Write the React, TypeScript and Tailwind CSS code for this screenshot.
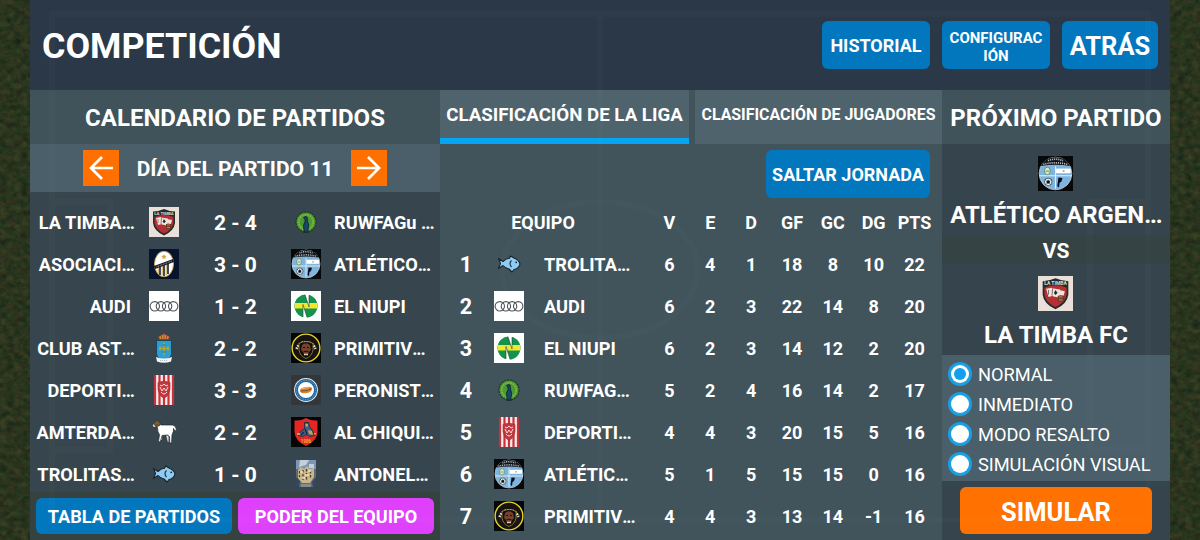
import type { ReactNode } from "react";

type CrestName =
  | "timba"
  | "asociacion"
  | "audi"
  | "asturias"
  | "deportivo"
  | "ram"
  | "fish"
  | "peacock"
  | "atletico"
  | "niupi"
  | "primitivos"
  | "peronistas"
  | "chiqui"
  | "antonela";

const crests: Record<CrestName, ReactNode> = {
  timba: (
    <>
      <rect width="30" height="30" fill="#e9e0d9" />
      <path d="M4 4.500 Q9 4.500 15 2 Q21 4.500 26 4.500 L26 16 Q25 24 15 28.500 Q5 24 4 16Z" fill="#252c2a" />
      <path d="M5.500 10 Q15 6 24.500 10 L24.500 16 Q23 23 15 26.500 Q7 23 5.500 16Z" fill="#b62f34" />
      <path d="M7 11 l5 -1 1 7 -4 1Z M12 10.500 l7 1 -1 7 -5 -1Z M18 12 l5 1 -1 4 -5 -1Z" fill="#eee3db" />
      <path d="M17 17 h6 l-1 5 h-5Z" fill="#6d3b24" />
      <path d="M18 18 h3 M18 20.500 h3" stroke="#c99d70" strokeWidth=".8" />
      <path d="M15 12.500 l1.500 2 -1.500 1.500 -1 -1.500Z M9 12 v4 M12.500 11 l-.5 6" fill="#222" stroke="#222" strokeWidth=".5" />
      <text x="15" y="8" textAnchor="middle" fontSize="4.300" fontWeight="700" fill="#dddcd0">LA TIMBA</text>
    </>
  ),
  asociacion: (
    <>
      <rect width="30" height="30" fill="#07142d" />
      <ellipse cx="15" cy="15" rx="9.500" ry="12.700" fill="#fff" stroke="#c7a352" strokeWidth="1" />
      <path d="M11 18 v8 M15 16 v11 M19 14 v11" stroke="#171e2b" strokeWidth="1.600" />
      <path d="M9.200 19 v6 M13.200 17 v9 M17.200 15 v11" stroke="#caa557" strokeWidth="1" />
      <path d="M5 17 L24 10 L25 13 L6 20Z" fill="#151c2b" />
      <path d="M7.500 17.800 L23 12" stroke="#d8c79a" strokeWidth=".8" strokeDasharray="1 .7" />
      <path d="M15 5 l.8 1.700 1.900 .2 -1.400 1.300 .4 1.900 -1.700 -.9 -1.700 .9 .4 -1.900 -1.400 -1.300 1.900 -.2Z" fill="#d7a543" />
    </>
  ),
  audi: (
    <>
      <rect width="30" height="30" fill="#fff" />
      <g fill="none" stroke="#50545a" strokeWidth="1.100">
        <circle cx="5.800" cy="15.300" r="4.700" />
        <circle cx="11.900" cy="15.300" r="4.700" />
        <circle cx="18.100" cy="15.300" r="4.700" />
        <circle cx="24.200" cy="15.300" r="4.700" />
      </g>
    </>
  ),
  asturias: (
    <>
      <path d="M10.500 6.500 L9.500 3.500 L12 2.500 L15 .8 L18 2.500 L20.500 3.500 L19.500 6.500Z" fill="#d08b3a" stroke="#8a3a2d" strokeWidth=".8" />
      <path d="M12.500 3 v3 M15 2 v4 M17.500 3 v3" stroke="#a33b30" strokeWidth=".8" />
      <path d="M7.500 7.500 h15 v13 q0 5 -7.500 7.500 q-7.500 -2.500 -7.500 -7.500Z" fill="#2b9ed5" stroke="#1c3c4c" strokeWidth=".8" />
      <path d="M15 9.500 v13 M10 15.500 h10 M11 13.500 v4 M19 13.500 v4" stroke="#b5a62e" strokeWidth="1.500" />
      <path d="M13.500 12 h3 M13.500 19 h3" stroke="#1d6a7c" strokeWidth=".8" />
      <path d="M7 24 Q15 27 23 24 L22 28.500 Q15 31 8 28.500Z" fill="#f2f4f4" />
      <path d="M11 27.500 h8" stroke="#8e9496" strokeWidth=".6" strokeDasharray="1 1" />
    </>
  ),
  deportivo: (
    <>
      <rect x="5" width="20" height="30" fill="#f6eaec" />
      <path d="M6 0 v30 M10.500 0 v30 M15 0 v30 M19.500 0 v30 M24 0 v30" stroke="#c5343b" strokeWidth="2.200" />
      <path d="M9 7.500 Q15 5 21 7.500 v7 Q20 21 15 23.500 Q10 21 9 14.500Z" fill="#c6373d" stroke="#a52a32" strokeWidth=".6" />
      <path d="M11 10 l2 1 2 -2 2 2 2 -1 M11 12 l2 4 2 -3 2 3 2 -4 M12 17 q3 4 6 0" fill="none" stroke="#f4dedf" strokeWidth="1" />
    </>
  ),
  ram: (
    <g stroke="#22272a" strokeWidth=".7" strokeLinejoin="round">
      <path d="M16.500 18 L18.500 25.500 L20 25.500 L20 18Z M11.500 18 L11.500 23.500 L13 23.500 L14 18Z" fill="#d9dcdd" />
      <path d="M6.500 9 L8.500 10.500 Q8.500 15.500 10.500 17.500 L9.500 24.500 L11.300 25 L13 18.500 L18.500 18 L20.500 19.500 L20.800 26 L22.600 26 L23 18 Q25 14 24.500 11.500 L26 14 L27.500 13 Q27 8.500 23.500 8 L12 8 L9.500 6Z" fill="#fff" />
      <path d="M3.500 8.500 L5 5.500 L8 6 L7 10 L4.500 10.500Z" fill="#f2dfc9" />
      <circle cx="8.200" cy="6.500" r="2.900" fill="#8b6532" />
      <circle cx="8.200" cy="6.700" r="1" fill="#cba768" />
    </g>
  ),
  fish: (
    <g>
      <path d="M4.500 9.500 L9 12.500 Q12 9.500 15.500 9.300 L16.500 7 L20 9 Q25 11 26 15 Q25 19.500 20 20.500 L18 23 L15 20 Q11.500 19.500 9 16.500 L4.500 19.500 L6.500 14.500Z" fill="#8fcbf3" stroke="#17232c" strokeWidth="1.100" strokeLinejoin="round" />
      <path d="M17.500 11.500 Q14.500 14.500 17.500 18" fill="none" stroke="#1d3548" strokeWidth="1.200" />
      <circle cx="22.200" cy="13.300" r=".9" fill="#14212a" />
    </g>
  ),
  peacock: (
    <>
      <circle cx="15" cy="15" r="10" fill="#4f9636" stroke="#1f3a24" strokeWidth="1.300" strokeDasharray="2 .8" />
      <circle cx="15" cy="15" r="7.300" fill="none" stroke="#72b83e" strokeWidth="2" strokeDasharray="2 .7" />
      <path d="M12.500 11 Q13.500 8.500 16 10 L16.500 14 Q18.500 18 17 23 L15 26 L13 23 Q11.500 18 14 14.500 L14 12Z" fill="#174966" stroke="#0c202e" strokeWidth=".8" />
      <path d="M13 23.500 v2.500 M17 23.500 v2.500" stroke="#11272d" strokeWidth="1" />
    </>
  ),
  atletico: (
    <>
      <rect width="30" height="30" fill="#06080a" />
      <circle cx="15" cy="15" r="14" fill="#7eb5df" stroke="#b9c9d3" strokeWidth=".7" />
      <path d="M2.500 8.500 Q6 1 15 1 Q24 1 27.500 8.500 Q15 6.500 2.500 8.500Z" fill="#101317" />
      <path d="M4.500 7.200 Q15 4.500 25.500 7.200 M8.500 4 Q15 1.500 21.500 4" fill="none" stroke="#b5bec3" strokeWidth="1.500" strokeDasharray="1 .8" />
      <path d="M1 17 h28 M15 9 v19" stroke="#e3f0f7" strokeWidth=".9" />
      <rect x="15.500" y="10.800" width="12.500" height="4" fill="#fff" />
      <circle cx="22" cy="12.800" r=".9" fill="#d1a64e" />
      <ellipse cx="8" cy="12.800" rx="2.500" ry="3.200" fill="#d7e8df" stroke="#618f67" strokeWidth=".8" />
      <path d="M6.500 13 h3" stroke="#a9893e" strokeWidth="1" />
      <circle cx="8.800" cy="22.200" r="3.200" fill="#f4f7f8" stroke="#1d2b34" strokeWidth=".6" />
      <path d="M8.800 20.700 l1.400 1.100 -.5 1.600 h-1.800 l-.5 -1.600Z M6 20 l1 1 M11.500 20 l-1 1 M11 24.500 l-1 -1 M6.500 24.500 l1 -1" fill="#111" stroke="#111" strokeWidth=".5" />
      <path d="M17.500 18.500 L21 18.800 L20 22 L18.500 23 L18 27 L16.500 26Z" fill="#080d22" />
    </>
  ),
  niupi: (
    <>
      <rect width="30" height="30" fill="#fff" />
      <ellipse cx="15" cy="15" rx="11.500" ry="11.500" fill="#15924b" />
      <path d="M3.900 12 H26.100 L26.300 17.500 H3.700Z" fill="#f1e72f" />
      <path d="M13.500 2 H18 V16Z M12 13.500 L16.500 28 H12Z" fill="#fff" />
      <path d="M14 3.700 L18 16 V4.300 M12 26 V13.500 L16 26.300" fill="none" stroke="#26452b" strokeWidth=".6" />
    </>
  ),
  primitivos: (
    <>
      <rect width="30" height="30" fill="#050607" />
      <circle cx="15" cy="15" r="13.900" fill="#171312" stroke="#e6d629" strokeWidth="1.400" />
      <path d="M5.500 16 A10 10 0 0 1 24.500 16" fill="none" stroke="#e4e2d8" strokeWidth="2.500" strokeDasharray="1.700 .9" />
      <path d="M8 10.500 Q15 6.500 22 10.500 V17 Q21 23 15 25.500 Q9 23 8 17Z" fill="#100e0d" stroke="#b89d2c" strokeWidth=".7" />
      <path d="M11 12 Q15 8.500 19 12 L20 17 L18 19 L17 22 H13 L12 19 L10 17Z" fill="#75402e" />
      <path d="M12 14.500 h2 M16 14.500 h2 M12.500 19 Q15 17.500 17.500 19" fill="none" stroke="#1f1212" strokeWidth="1.200" />
      <path d="M13 21.500 h4" stroke="#ebdfcf" strokeWidth="1.500" strokeDasharray="1.800 .4" />
    </>
  ),
  peronistas: (
    <>
      <rect width="30" height="30" fill="#34373a" />
      <circle cx="15" cy="15" r="11.900" fill="#e8eff2" />
      <circle cx="15" cy="15" r="9.500" fill="#fff" stroke="#2267a2" strokeWidth="3" />
      <circle cx="15" cy="15" r="9.600" fill="none" stroke="#99bfd9" strokeWidth=".8" strokeDasharray="1 1.500" />
      <path d="M9 15.500 Q9 12.500 15 12 Q21 11 21 14 Q21 17.500 14.500 18.300 Q9.500 18.700 9 15.500Z" fill="#d9822e" />
      <path d="M9.500 16 Q15 16.500 20.500 13.800" stroke="#74502c" strokeWidth="1" fill="none" />
      <path d="M11 13.600 Q14 12.600 18 12.700" stroke="#f5bc6c" strokeWidth="1" fill="none" />
    </>
  ),
  chiqui: (
    <>
      <rect width="30" height="30" fill="#050505" />
      <path d="M3.500 3.500 Q10 4 15 1 Q20 4 26.500 3.500 V15 Q26 24 15 29 Q4 24 3.500 15Z" fill="#e32726" />
      <path d="M13.500 5.500 h4 l1 4 3 4 2 5 -5 1 -3 -2 -4 2 -4 -1 2 -4 4 -3Z" fill="#3c5f8c" stroke="#15283b" strokeWidth=".8" />
      <path d="M14.500 7 h2.500 v2.500 h-2.500Z M17 13 l4 1 1 4 -4 -1Z M6 16 h3 v2 h-3Z M23 16 h2 v1.500 h-2Z" fill="#c9a346" />
      <path d="M10 18 l3 -3 M14 12 l2 5" stroke="#152435" strokeWidth="1.200" />
      <text x="15" y="25.500" textAnchor="middle" fontSize="4.500" fontWeight="700" fill="#d7b72f">1986</text>
    </>
  ),
  antonela: (
    <>
      <rect x="5" y="1" width="20" height="27" fill="#5f6a73" />
      <path d="M5 1 h20 v9 h-20Z" fill="#7c95b4" />
      <path d="M9 1 h9 l-3 5 -7 2Z M18 5 h5 v4 h-5Z" fill="#c4cfda" />
      <path d="M7 11 L10 8 L13 10 L16 7 L19 10 L23 9 V18 L19 24 H11 L7 19Z" fill="#c8b68a" />
      <path d="M8.500 12 v6 M12 11 v10 M15.500 10 v12 M19.500 12 v8" stroke="#4a3d2d" strokeWidth="1.300" strokeDasharray="2.500 1.500" />
      <path d="M9 13 h3 M14 16 h4 M17 12 h3 M11 19 h3" stroke="#f0e3bd" strokeWidth="1.600" />
      <path d="M5 18 L9 22 L8 28 H5Z M25 18 L21 23 L22 28 H25Z" fill="#33475e" />
      <path d="M10 25 h10 v3 h-10Z" fill="#858b91" />
    </>
  )
};

function Crest({ name, className = "size-[30px]" }: { name: CrestName; className?: string }) {
  return (
    <svg viewBox="0 0 30 30" className={`shrink-0 ${className}`} aria-hidden="true">
      {crests[name]}
    </svg>
  );
}

type Match = {
  home: string;
  homeCrest: CrestName;
  score: string;
  away: string;
  awayCrest: CrestName;
};

const matches: Match[] = [
  { home: "LA TIMBA...", homeCrest: "timba", score: "2 - 4", away: "RUWFAGu ...", awayCrest: "peacock" },
  { home: "ASOCIACI...", homeCrest: "asociacion", score: "3 - 0", away: "ATLÉTICO...", awayCrest: "atletico" },
  { home: "AUDI", homeCrest: "audi", score: "1 - 2", away: "EL NIUPI", awayCrest: "niupi" },
  { home: "CLUB AST...", homeCrest: "asturias", score: "2 - 2", away: "PRIMITIV...", awayCrest: "primitivos" },
  { home: "DEPORTI...", homeCrest: "deportivo", score: "3 - 3", away: "PERONIST...", awayCrest: "peronistas" },
  { home: "AMTERDA...", homeCrest: "ram", score: "2 - 2", away: "AL CHIQUI...", awayCrest: "chiqui" },
  { home: "TROLITAS...", homeCrest: "fish", score: "1 - 0", away: "ANTONEL...", awayCrest: "antonela" }
];

const columns = ["V", "E", "D", "GF", "GC", "DG", "PTS"];

const standings: { team: string; crest: CrestName; stats: number[] }[] = [
  { team: "TROLITA...", crest: "fish", stats: [6, 4, 1, 18, 8, 10, 22] },
  { team: "AUDI", crest: "audi", stats: [6, 2, 3, 22, 14, 8, 20] },
  { team: "EL NIUPI", crest: "niupi", stats: [6, 2, 3, 14, 12, 2, 20] },
  { team: "RUWFAG...", crest: "peacock", stats: [5, 2, 4, 16, 14, 2, 17] },
  { team: "DEPORTI...", crest: "deportivo", stats: [4, 4, 3, 20, 15, 5, 16] },
  { team: "ATLÉTIC...", crest: "atletico", stats: [5, 1, 5, 15, 15, 0, 16] },
  { team: "PRIMITIV...", crest: "primitivos", stats: [4, 4, 3, 13, 14, -1, 16] }
];

const modes = ["NORMAL", "INMEDIATO", "MODO RESALTO", "SIMULACIÓN VISUAL"];

function TeamLabel({ name }: { name: string }) {
  const cut = name.endsWith("...");
  return (
    <>
      {cut ? name.slice(0, -3) : name}
      {cut && <span className="tracking-[-1.1px]">...</span>}
    </>
  );
}

function Grass() {
  return (
    <svg className="absolute inset-0 h-full w-full" viewBox="0 0 1200 540" aria-hidden="true">
      <defs>
        <filter id="grass" x="0" y="0" width="100%" height="100%" colorInterpolationFilters="sRGB">
          <feTurbulence type="fractalNoise" baseFrequency=".14 .18" numOctaves="3" seed="8" />
          <feColorMatrix values=".2 .05 0 0 .04  .08 .13 0 0 .1  .05 .04 0 0 .07  0 0 0 0 1" />
        </filter>
      </defs>
      <rect width="1200" height="540" filter="url(#grass)" />
    </svg>
  );
}

// Faint pitch markings that shine through the panels
function PitchLines() {
  return (
    <svg className="pointer-events-none absolute inset-0 h-full w-full" viewBox="0 0 1200 540" aria-hidden="true">
      <g fill="none" stroke="#fff" strokeOpacity=".014" strokeWidth="6">
        <path d="M52 14 H1148 V520 H52Z M52 202 H110 V450 H52 M1148 202 H1090 V450 H1148 M600 14 V520" />
        <ellipse cx="600" cy="270" rx="98" ry="68" />
      </g>
    </svg>
  );
}

function Schedule() {
  return (
    <section className="flex flex-col bg-[#37464e]">
      <h2 className="flex h-[54px] items-center justify-center bg-[#41535a] pt-0.5 text-[24px]">
        CALENDARIO DE PARTIDOS
      </h2>
      <div className="flex h-12 items-center justify-between bg-[#4a5f69] px-[53px]">
        <button type="button" className="grid size-9 place-items-center bg-[#ff7000]">
          <svg viewBox="0 0 36 36" className="size-9" fill="none" stroke="currentColor" strokeWidth="2.700">
            <path d="M30 18 H8 M19 7 L8 18 L19 29" />
          </svg>
        </button>
        <span className="pt-[3px] text-[21px]">DÍA DEL PARTIDO 11</span>
        <button type="button" className="grid size-9 place-items-center bg-[#ff7000]">
          <svg viewBox="0 0 36 36" className="size-9" fill="none" stroke="currentColor" strokeWidth="2.700">
            <path d="M6 18 H28 M17 7 L28 18 L17 29" />
          </svg>
        </button>
      </div>
      <ul className="h-[300px] pt-[9px]">
        {matches.map((match) => (
          <li key={match.home} className="grid h-[42px] grid-cols-[104px_59px_85px_56px_106px] items-center text-[18.200px]">
            <span className={`pt-px text-right whitespace-nowrap ${match.home.endsWith("...") ? "" : "pr-[3px]"}`}>
              <TeamLabel name={match.home} />
            </span>
            <Crest name={match.homeCrest} className="size-[30px] justify-self-center" />
            <span className="pt-[3px] text-center text-[21px]">{match.score}</span>
            <Crest name={match.awayCrest} className="size-[30px] justify-self-center" />
            <span className="pt-px whitespace-nowrap">
              <TeamLabel name={match.away} />
            </span>
          </li>
        ))}
      </ul>
      <div className="flex flex-1 gap-1.5 bg-[#35423f] p-1.5 text-[18.100px]">
        <button type="button" className="flex-1 rounded-md bg-[#0377be] pt-px">
          TABLA DE PARTIDOS
        </button>
        <button type="button" className="flex-1 rounded-md bg-[#df40fb] pt-px">
          PODER DEL EQUIPO
        </button>
      </div>
    </section>
  );
}

function League() {
  return (
    <section className="bg-[#41535b]">
      <div className="flex h-[54px] justify-between">
        <button type="button" className="w-[249px] border-b-6 border-[#06a5f2] bg-[#4f636d] pt-[3px] text-[18.700px] whitespace-nowrap">
          CLASIFICACIÓN DE LA LIGA
        </button>
        <button type="button" className="w-[247px] bg-[#4f636d] pb-[5px] text-[15.900px] whitespace-nowrap">
          CLASIFICACIÓN DE JUGADORES
        </button>
      </div>
      <div className="flex h-[57px] justify-end pt-1.5 pr-3">
        <button type="button" className="h-12 w-[164px] rounded-md bg-[#0377be] pt-px text-[18px]">
          SALTAR JORNADA
        </button>
      </div>
      <div className="grid h-[42px] grid-cols-[209px_repeat(7,40.850px)] items-center pt-px text-center text-[18px]">
        <span className="pr-[3px]">EQUIPO</span>
        {columns.map((column) => (
          <span key={column}>{column}</span>
        ))}
      </div>
      {standings.map((row, index) => (
        <div key={row.team} className="grid h-[42px] grid-cols-[52px_52px_105px_repeat(7,40.850px)] items-center text-center text-[18px]">
          <span className="pt-[3px] text-[21.500px]">{index + 1}</span>
          <Crest name={row.crest} className="ml-0.5 size-[30px]" />
          <span className="pt-px text-left text-[18.200px] whitespace-nowrap">
            <TeamLabel name={row.team} />
          </span>
          {row.stats.map((value, statIndex) => (
            <span key={columns[statIndex]} className="pt-px">
              {value}
            </span>
          ))}
        </div>
      ))}
    </section>
  );
}

function NextMatch() {
  return (
    <section className="flex flex-col bg-[#36454d]">
      <h2 className="flex h-[54px] items-center justify-center bg-[#41535a] pt-0.5 text-[24px]">PRÓXIMO PARTIDO</h2>
      <div className="flex h-[91px] flex-col items-center pt-3">
        <Crest name="atletico" className="mr-px size-[35px]" />
        <span className="mt-1.5 text-[23.900px] leading-9 whitespace-nowrap">
          <TeamLabel name="ATLÉTICO ARGEN..." />
        </span>
      </div>
      <div className="flex h-[29px] items-center justify-center bg-[#354344] pt-1 text-[21px]">VS</div>
      <div className="flex h-[91px] flex-col items-center pt-3">
        <Crest name="timba" className="mr-px size-[35px]" />
        <span className="mt-1.5 text-[24px] leading-9">LA TIMBA FC</span>
      </div>
      <div className="h-[126px] bg-[#4a5f69] pt-1 pl-1.5">
        {modes.map((mode, index) => (
          <label key={mode} className="flex h-[30px] items-center gap-1.5 text-[18.200px] font-normal">
            <span className="grid size-6 place-items-center rounded-full bg-[#1a9fe3]">
              <span className="grid size-[18px] place-items-center rounded-full bg-white">
                {index === 0 && <span className="size-3 rounded-full bg-[#12a0ee]" />}
              </span>
            </span>
            <span className="pt-px">{mode}</span>
          </label>
        ))}
      </div>
      <div className="flex flex-1 justify-center pt-1.5">
        <button type="button" className="h-[47px] w-48 rounded-md bg-[#ff7100] pt-[3px] text-[25.500px]">
          SIMULAR
        </button>
      </div>
    </section>
  );
}

export default function App() {
  return (
    <div className="relative h-[540px] w-[1200px] overflow-hidden px-[30px] font-['Roboto',sans-serif] font-bold text-white">
      <Grass />
      <main className="relative h-full">
        <header className="flex h-[90px] items-center bg-[#2b3848] px-3">
          <h1 className="flex-1 pt-1 text-[35.800px]">COMPETICIÓN</h1>
          <nav className="flex gap-3">
            <button type="button" className="h-12 w-[108px] rounded-md bg-[#0377be] pt-px text-[18px]">
              HISTORIAL
            </button>
            <button type="button" className="h-12 w-[108px] rounded-md bg-[#0377be] pt-1 text-[15px] leading-[18px]">
              CONFIGURAC
              <br />
              IÓN
            </button>
            <button type="button" className="h-12 w-24 rounded-md bg-[#0377be] pt-[3px] text-[25.500px]">
              ATRÁS
            </button>
          </nav>
        </header>
        <div className="grid h-[450px] grid-cols-[410px_502px_228px]">
          <Schedule />
          <League />
          <NextMatch />
        </div>
      </main>
      <PitchLines />
    </div>
  );
}
